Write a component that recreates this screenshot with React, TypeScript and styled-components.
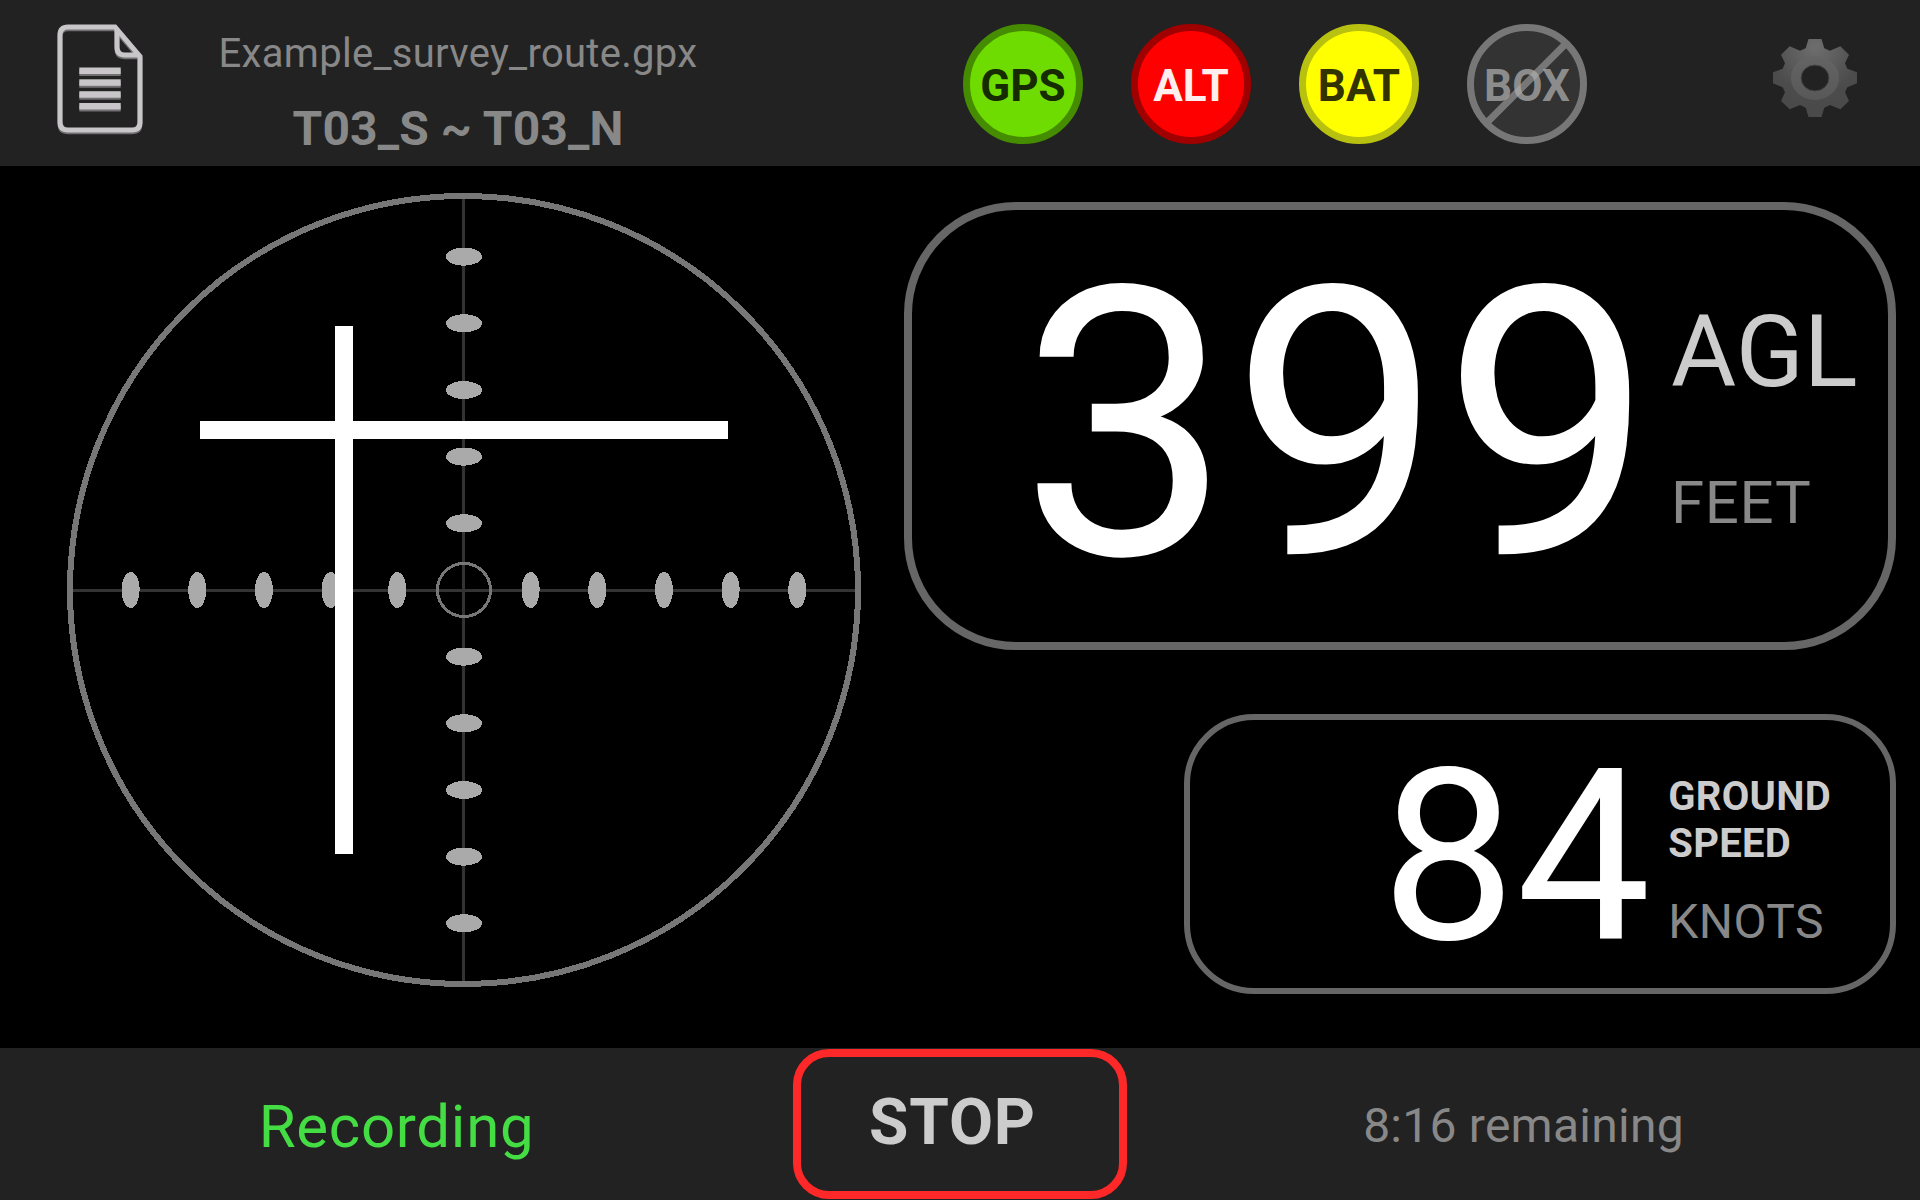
import React from "react";
import styled, { createGlobalStyle } from "styled-components";

const GlobalStyle = createGlobalStyle`
  *, *::before, *::after { box-sizing: border-box; }
  body { margin: 0; background: #000; font-family: Roboto, "Liberation Sans", sans-serif; overflow: hidden; }
`;

const Screen = styled.div`
  width: 1920px;
  height: 1200px;
  display: grid;
  grid-template-rows: 166px 1fr 152px;
  background: #000;
`;

const TopBar = styled.header`
  display: flex;
  align-items: flex-start;
  padding: 0 63px 0 56px;
  background: #222;
`;

const RouteInfo = styled.div`
  width: 600px;
  margin-left: 14px;
  padding-top: 34px;
  display: flex;
  flex-direction: column;
  align-items: center;
`;

interface LabelProps {
  $size: number;
  $line?: number;
  $bold?: boolean;
  $color?: string;
  $spacing?: number;
  $top?: number;
}

const Label = styled.span<LabelProps>`
  display: block;
  white-space: pre;
  font-size: ${(p) => p.$size}px;
  line-height: ${(p) => p.$line ?? p.$size}px;
  font-weight: ${(p) => (p.$bold ? 700 : 400)};
  color: ${(p) => p.$color ?? "#888"};
  letter-spacing: ${(p) => p.$spacing ?? 0}px;
  margin-top: ${(p) => p.$top ?? 0}px;
`;

const Badges = styled.div`
  display: flex;
  gap: 48px;
  margin: 24px 0 0 205px;
`;

const Badge = styled.div<{ $fill: string; $ring: string; $ink: string }>`
  position: relative;
  width: 120px;
  height: 120px;
  padding-top: 3px;
  display: flex;
  align-items: center;
  justify-content: center;
  border-radius: 50%;
  border: 7px solid ${(p) => p.$ring};
  background: ${(p) => p.$fill};
  color: ${(p) => p.$ink};
  font-size: 44px;
  font-weight: 700;
  line-height: 44px;
`;

const BadgeText = styled.span`
  position: relative;
`;

const Slash = styled.svg`
  position: absolute;
  inset: -7px;
`;

const FileButton = styled.div`
  margin-top: 22px;
  height: 114px;
`;

const SettingsButton = styled.div`
  margin: 39px 0 0 auto;
  height: 78px;
`;

const Main = styled.main`
  display: flex;
  justify-content: space-between;
  padding: 0 24px 0 67px;
`;

const Dial = styled.svg`
  margin-top: 27px;
  flex: none;
`;

const Readouts = styled.section`
  display: flex;
  flex-direction: column;
  align-items: flex-end;
  gap: 64px;
  padding-top: 36px;
`;

const Panel = styled.div<{ $w: number; $h: number; $border: number; $radius: number; $left: number; $gap: number }>`
  width: ${(p) => p.$w}px;
  height: ${(p) => p.$h}px;
  border: ${(p) => p.$border}px solid #666;
  border-radius: ${(p) => p.$radius}px;
  padding-left: ${(p) => p.$left}px;
  display: flex;
  align-items: flex-start;
  gap: ${(p) => p.$gap}px;
`;

const Units = styled.div`
  display: flex;
  flex-direction: column;
`;

const BottomBar = styled.footer`
  display: grid;
  grid-template-columns: 793px 334px 793px;
  justify-items: center;
  padding-top: 1px;
  background: #222;
`;

const StopButton = styled.button`
  width: 334px;
  height: 150px;
  padding: 34px 15px 0 0;
  display: flex;
  justify-content: center;
  align-items: flex-start;
  border: 8px solid #ff2828;
  border-radius: 36px;
  background: transparent;
  font-family: inherit;
`;

function DocumentIcon() {
  const page = "M115 27 H68 Q60 27 60 35 V122 Q60 130 68 130 H132 Q140 130 140 122 V56.5 Z";
  const fold = "M117 29 V47 Q117 55 125 55 H139";
  const rows = [67.5, 79.3, 91.2, 103];
  return (
    <svg width="88" height="114" viewBox="56 22 88 114" fill="none">
      <g stroke="#716f71" strokeWidth="5" transform="translate(0 1.8)">
        <path d={page} />
        <path d={fold} />
      </g>
      <g stroke="#c8c6c8" strokeWidth="5">
        <path d={page} />
        <path d={fold} />
      </g>
      {rows.map((y) => (
        <g key={y}>
          <rect x="79.3" y={y + 2} width="41.4" height="6.5" fill="#716f71" />
          <rect x="79.3" y={y} width="41.4" height="6.5" fill="#c8c6c8" />
        </g>
      ))}
    </svg>
  );
}

function GearIcon() {
  return (
    <svg width="84" height="78" viewBox="0 0 84 78">
      <defs>
        <radialGradient id="gearBody" gradientUnits="userSpaceOnUse" cx="42" cy="8" r="62">
          <stop offset="0" stopColor="#6e6e6e" />
          <stop offset="0.75" stopColor="#4c4c4c" />
          <stop offset="1" stopColor="#4a4a4a" />
        </radialGradient>
        <linearGradient id="gearHub" x1="0" y1="0" x2="0" y2="1">
          <stop offset="0" stopColor="#646464" />
          <stop offset="1" stopColor="#585858" />
        </linearGradient>
      </defs>
      <path
        fill="url(#gearBody)"
        d="M35.5 0H48.5L51.3 9.3L57 11.7L67.3 7.3L76 15.7L72 24.3L74.3 29.7L84 33.3V44.3L74.3 48.3L72 53.3L76 62L67.3 70.3L57 66L51.3 68.7L48.5 78H35.5L32.7 68.7L27 66L16.7 70.3L8 62L12 53.3L9.7 48.3L0 44.3V33.3L9.7 29.7L12 24.3L8 15.7L16.7 7.3L27 11.7L32.7 9.3Z"
      />
      <ellipse cx="42" cy="39" rx="24" ry="22" fill="url(#gearHub)" />
      <ellipse cx="42" cy="39" rx="14" ry="13" fill="#222" stroke="#484848" />
    </svg>
  );
}

const STEP = 200 / 3;
const OFFSETS = [-5, -4, -3, -2, -1, 1, 2, 3, 4, 5].map((n) => n * STEP);

function CourseDial() {
  return (
    <Dial width="794" height="794" viewBox="67 193 794 794" shapeRendering="crispEdges">
      <rect x="462" y="196" width="3" height="788" fill="#333" />
      <rect x="70" y="589" width="788" height="3" fill="#333" />
      {OFFSETS.map((o) => (
        <g key={o} fill="#aaa">
          <ellipse cx={464 + o} cy="590" rx="9" ry="18" />
          <ellipse cx="464" cy={590 + o} rx="18" ry="9" />
        </g>
      ))}
      <circle cx="464" cy="590" r="394" fill="none" stroke="#777" strokeWidth="6" />
      <circle cx="464" cy="590" r="26.5" fill="none" stroke="#777" strokeWidth="3" />
      <rect x="335" y="326" width="18" height="528" fill="#fff" />
      <rect x="200" y="421" width="528" height="18" fill="#fff" />
    </Dial>
  );
}

export default function App() {
  return (
    <>
      <GlobalStyle />
      <Screen>
        <TopBar>
          <FileButton>
            <DocumentIcon />
          </FileButton>
          <RouteInfo>
            <Label $size={40} $spacing={0.29}>Example_survey_route.gpx</Label>
            <Label $size={48} $bold $spacing={0.1} $top={31}>T03_S ~ T03_N</Label>
          </RouteInfo>
          <Badges>
            <Badge $fill="#6edc00" $ring="#458c00" $ink="#162c00"><BadgeText>GPS</BadgeText></Badge>
            <Badge $fill="#ff0000" $ring="#a00000" $ink="#ffeeee"><BadgeText>ALT</BadgeText></Badge>
            <Badge $fill="#ffff00" $ring="#b8c010" $ink="#333300"><BadgeText>BAT</BadgeText></Badge>
            <Badge $fill="#333" $ring="#777" $ink="rgba(175,175,175,0.735)">
              <Slash width="120" height="120" viewBox="0 0 120 120">
                <path d="M98 20.5L21 97.5" stroke="#777" strokeWidth="7" />
              </Slash>
              <BadgeText>BOX</BadgeText>
            </Badge>
          </Badges>
          <SettingsButton>
            <GearIcon />
          </SettingsButton>
        </TopBar>
        <Main>
          <CourseDial />
          <Readouts>
            <Panel $w={992} $h={448} $border={8} $radius={112} $left={108} $gap={17}>
              <Label $size={376} $color="#fff" $top={28}>399</Label>
              <Units>
                <Label $size={100} $color="#ccc" $top={92}>AGL</Label>
                <Label $size={60} $spacing={0.7} $top={70.5}>FEET</Label>
              </Units>
            </Panel>
            <Panel $w={712} $h={280} $border={6} $radius={70} $left={191} $gap={17.5}>
              <Label $size={240} $color="#fff" $top={17}>84</Label>
              <Units>
                <Label $size={40} $line={47} $bold $color="#ccc" $spacing={0.28} $top={53}>GROUND</Label>
                <Label $size={40} $line={47} $bold $color="#ccc" $spacing={0.28}>SPEED</Label>
                <Label $size={48} $spacing={0.45} $top={30.5}>KNOTS</Label>
              </Units>
            </Panel>
          </Readouts>
        </Main>
        <BottomBar>
          <Label $size={60} $color="#44dd44" $spacing={0.7} $top={48}>Recording</Label>
          <StopButton>
            <Label $size={64} $bold $color="#ccc" $spacing={0.8}>STOP</Label>
          </StopButton>
          <Label $size={48} $spacing={0.25} $top={52.5}>8:16 remaining</Label>
        </BottomBar>
      </Screen>
    </>
  );
}
